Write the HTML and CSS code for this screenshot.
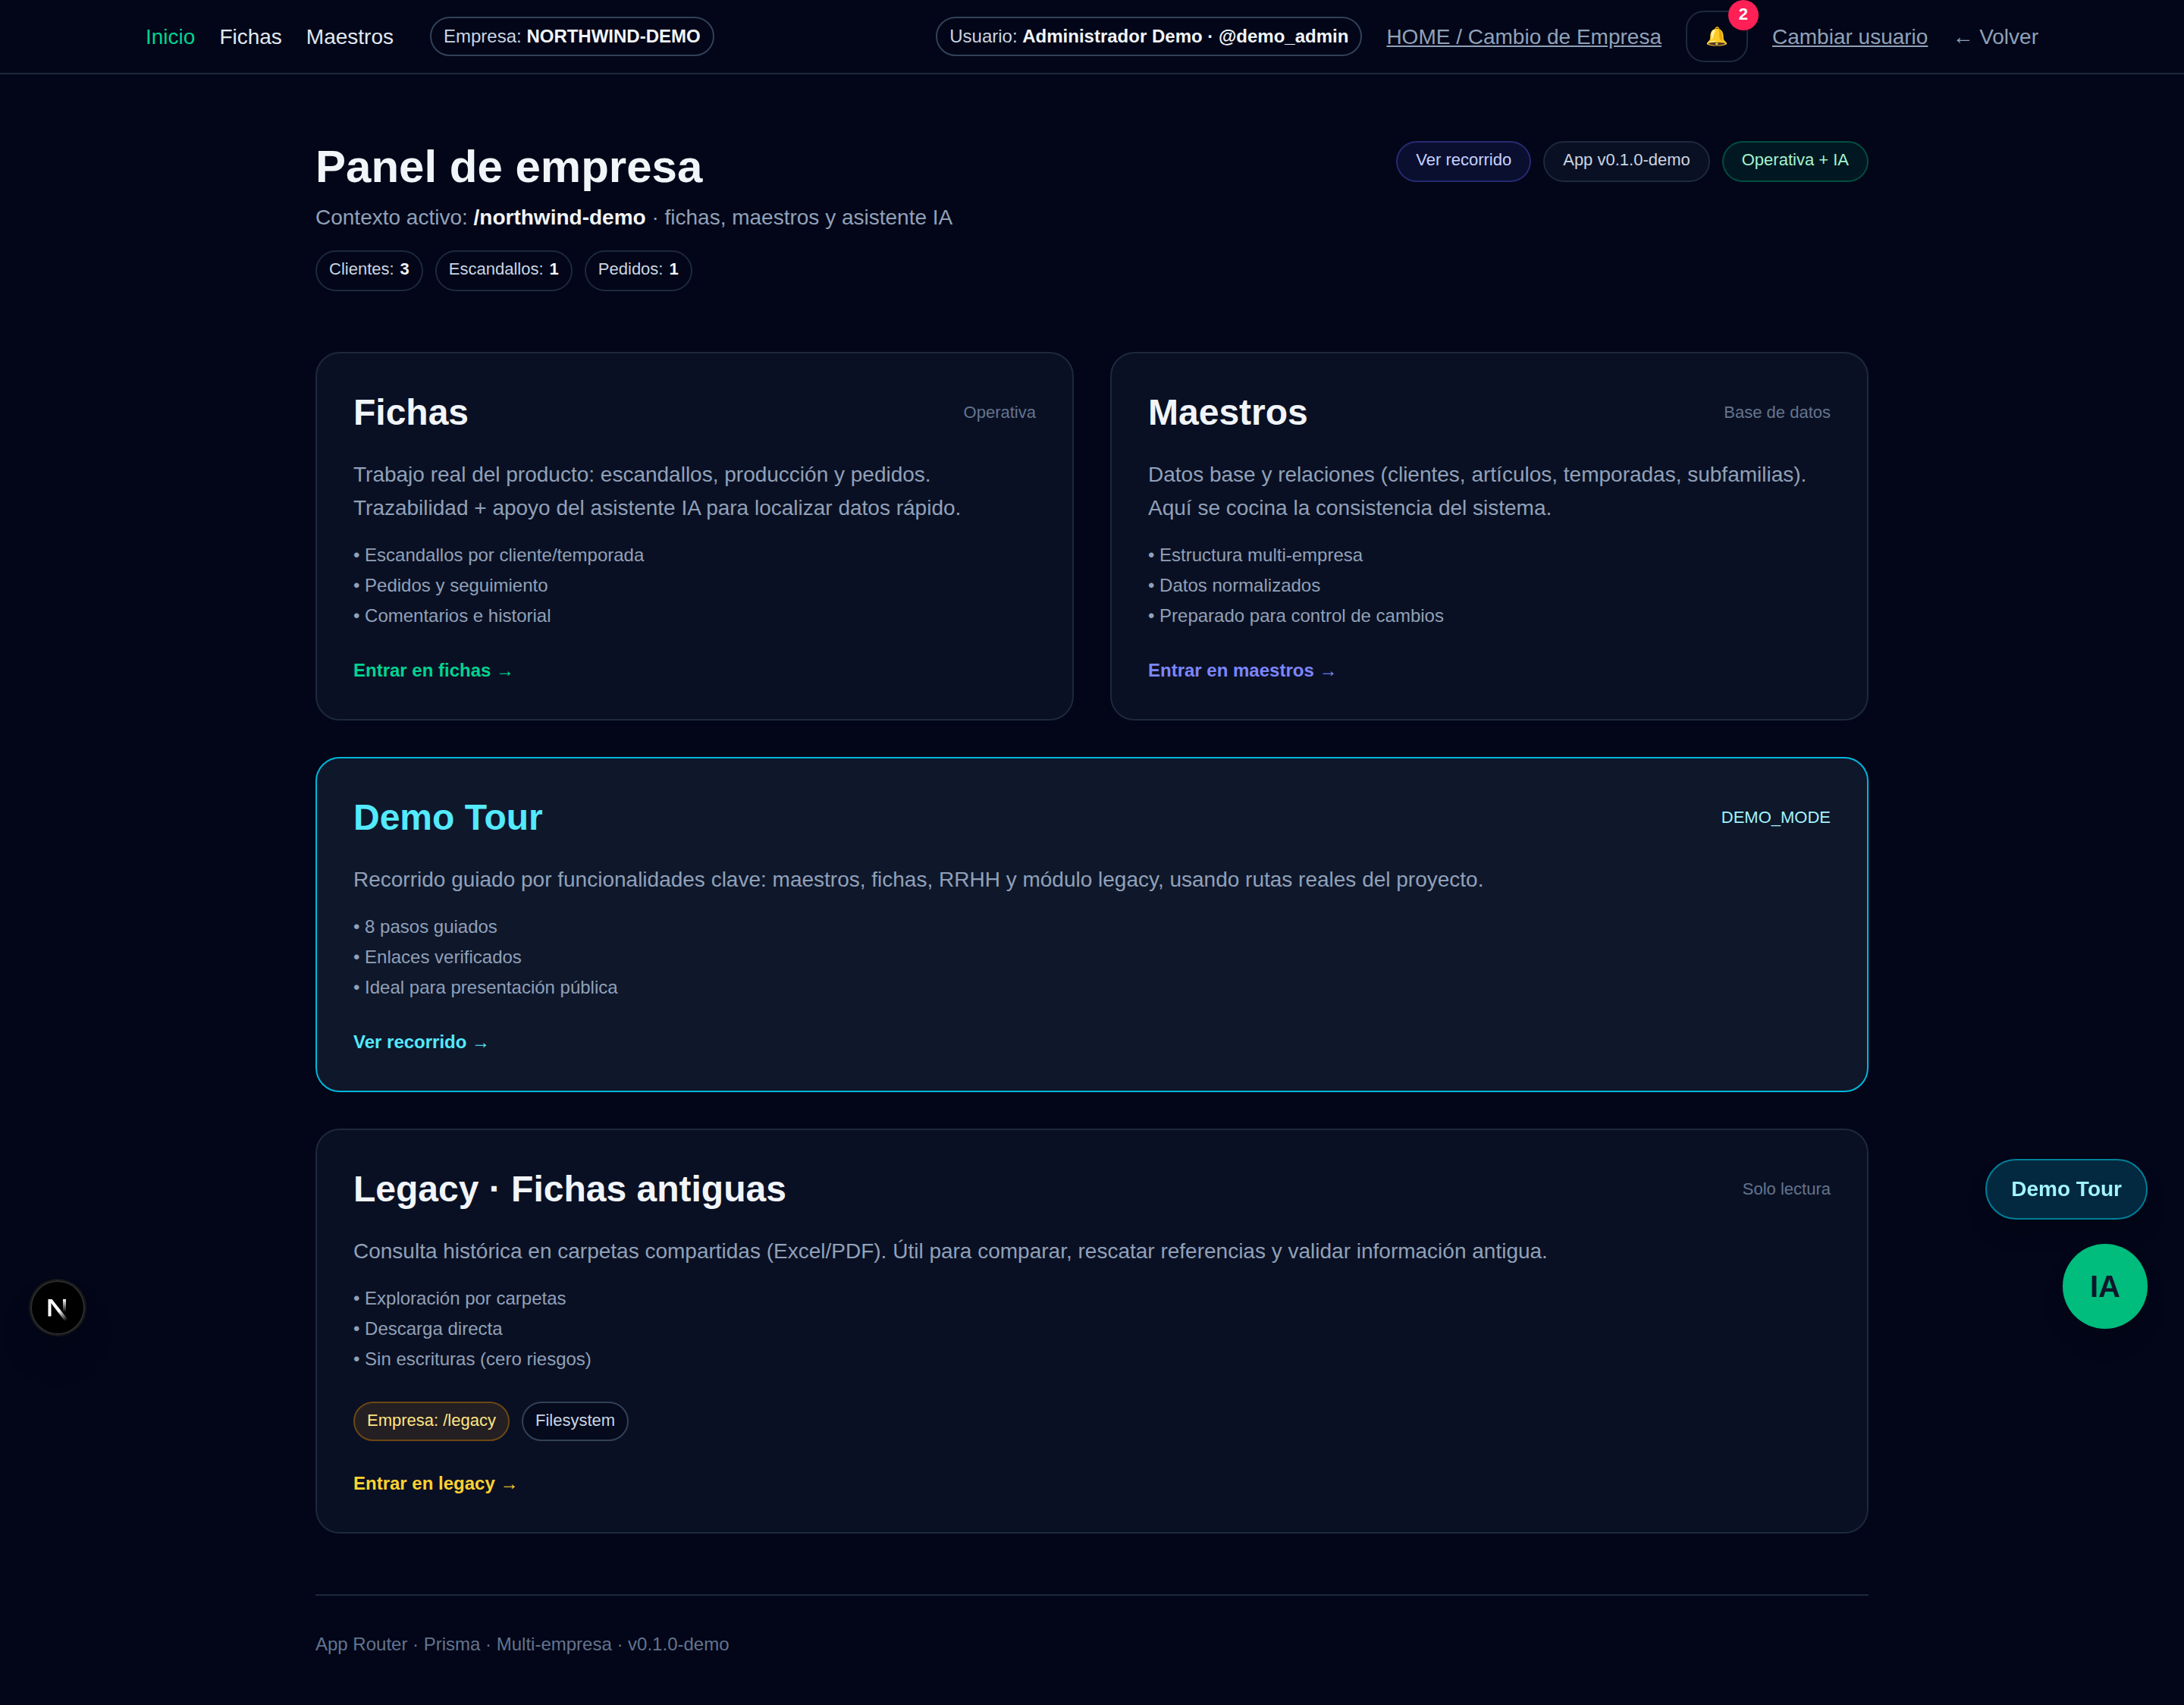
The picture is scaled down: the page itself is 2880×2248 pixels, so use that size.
FILE: index.html
```html
<!DOCTYPE html>
<html lang="es">
<head>
  <meta charset="UTF-8">
  <title>Panel de empresa</title>
  <link rel="stylesheet" href="styles.css">
</head>
<body>
  <header class="topbar">
    <div class="topbar-inner">
      <nav class="nav">
        <a href="#" class="active">Inicio</a>
        <a href="#">Fichas</a>
        <a href="#">Maestros</a>
      </nav>
      <span class="context">Empresa: <strong>NORTHWIND-DEMO</strong></span>
      <div class="session">
        <span class="context">Usuario: <strong>Administrador Demo · @demo_admin</strong></span>
        <a href="#" class="underlined">HOME / Cambio de Empresa</a>
        <button type="button" class="bell" aria-label="Notificaciones">🔔<span class="bell-count">2</span></button>
        <a href="#" class="underlined">Cambiar usuario</a>
        <a href="#">← Volver</a>
      </div>
    </div>
  </header>

  <main class="page">
    <section class="hero">
      <div>
        <h1>Panel de empresa</h1>
        <p class="subtitle">Contexto activo: <strong>/northwind-demo</strong> · fichas, maestros y asistente IA</p>
        <div class="stats">
          <span class="pill">Clientes: <strong>3</strong></span>
          <span class="pill">Escandallos: <strong>1</strong></span>
          <span class="pill">Pedidos: <strong>1</strong></span>
        </div>
      </div>
      <div class="badges">
        <a href="#" class="pill wide indigo">Ver recorrido</a>
        <span class="pill wide slate">App v0.1.0-demo</span>
        <span class="pill wide green">Operativa + IA</span>
      </div>
    </section>

    <section class="cards">
      <article class="card">
        <div class="card-head">
          <h2>Fichas</h2>
          <span class="tag">Operativa</span>
        </div>
        <p>Trabajo real del producto: escandallos, producción y pedidos.<br>Trazabilidad + apoyo del asistente IA para localizar datos rápido.</p>
        <ul>
          <li>• Escandallos por cliente/temporada</li>
          <li>• Pedidos y seguimiento</li>
          <li>• Comentarios e historial</li>
        </ul>
        <a href="#" class="enter enter-green">Entrar en fichas →</a>
      </article>

      <article class="card">
        <div class="card-head">
          <h2>Maestros</h2>
          <span class="tag">Base de datos</span>
        </div>
        <p>Datos base y relaciones (clientes, artículos, temporadas, subfamilias).<br>Aquí se cocina la consistencia del sistema.</p>
        <ul>
          <li>• Estructura multi-empresa</li>
          <li>• Datos normalizados</li>
          <li>• Preparado para control de cambios</li>
        </ul>
        <a href="#" class="enter enter-indigo">Entrar en maestros →</a>
      </article>

      <article class="card full demo">
        <div class="card-head">
          <h2>Demo Tour</h2>
          <span class="tag">DEMO_MODE</span>
        </div>
        <p>Recorrido guiado por funcionalidades clave: maestros, fichas, RRHH y módulo legacy, usando rutas reales del proyecto.</p>
        <ul>
          <li>• 8 pasos guiados</li>
          <li>• Enlaces verificados</li>
          <li>• Ideal para presentación pública</li>
        </ul>
        <a href="#" class="enter enter-cyan">Ver recorrido →</a>
      </article>

      <article class="card full">
        <div class="card-head">
          <h2>Legacy · Fichas antiguas</h2>
          <span class="tag">Solo lectura</span>
        </div>
        <p>Consulta histórica en carpetas compartidas (Excel/PDF). Útil para comparar, rescatar referencias y validar información antigua.</p>
        <ul>
          <li>• Exploración por carpetas</li>
          <li>• Descarga directa</li>
          <li>• Sin escrituras (cero riesgos)</li>
        </ul>
        <div class="sources">
          <span class="pill amber">Empresa: /legacy</span>
          <span class="pill dark">Filesystem</span>
        </div>
        <a href="#" class="enter enter-amber">Entrar en legacy →</a>
      </article>
    </section>

    <footer class="footer">App Router · Prisma · Multi-empresa · v0.1.0-demo</footer>
  </main>

  <div class="floating">
    <a href="#" class="tour">Demo Tour</a>
    <button type="button" class="assistant">IA</button>
  </div>

  <button type="button" class="devtools" aria-label="Next.js">
    <svg viewBox="0 0 72 72" width="72" height="72">
      <defs>
        <linearGradient id="diagonal" gradientUnits="userSpaceOnUse" x1="38" y1="40" x2="48" y2="53">
          <stop offset="0" stop-color="#fff"/>
          <stop offset="1" stop-color="#fff" stop-opacity="0"/>
        </linearGradient>
        <linearGradient id="stem" gradientUnits="userSpaceOnUse" x1="45" y1="25" x2="45" y2="42">
          <stop offset="0" stop-color="#fff"/>
          <stop offset="1" stop-color="#fff" stop-opacity="0"/>
        </linearGradient>
      </defs>
      <rect x="23.5" y="25" width="4" height="22.5" fill="#fff"/>
      <path d="M23.5 25h5L49.5 51.5L45.5 54Z" fill="url(#diagonal)"/>
      <rect x="43" y="25" width="4" height="17" fill="url(#stem)"/>
    </svg>
  </button>
</body>
</html>
```
FILE: styles.css
```css
* {
  box-sizing: border-box;
}
body {
  margin: 0;
  background-color: #020618;
  color: #e2e8f0;
  font-family: "Liberation Sans", Arial, sans-serif;
  font-size: 28px;
  line-height: 40px;
}
h1, h2, p, ul {
  margin: 0;
  padding: 0;
}
ul {
  list-style: none;
}
a {
  color: inherit;
  text-decoration: none;
}
button {
  font-family: inherit;
  cursor: pointer;
}

/* Barra superior */
.topbar {
  border-bottom: 2px solid #1d293d;
}
.topbar-inner {
  display: flex;
  align-items: center;
  max-width: 2560px;
  height: 96px;
  margin: 0 auto;
  padding: 0 32px;
}
.nav {
  display: flex;
  gap: 32px;
  margin-right: 48px;
}
.nav a, .session a {
  padding-top: 2px;
}
.nav .active {
  color: #00d492;
}
.context {
  padding: 8px 16px;
  border: 2px solid #314158;
  border-radius: 26px;
  color: #cad5e2;
  font-size: 24px;
  line-height: 32px;
}
.context strong {
  color: #f1f5f9;
}
.session {
  display: flex;
  align-items: center;
  gap: 32px;
  margin-left: auto;
  color: #90a1b9;
}
.underlined {
  text-decoration: underline;
}
.bell {
  position: relative;
  padding: 16px 24px;
  border: 2px solid #1d293d;
  border-radius: 24px;
  background: none;
  font-size: 24px;
  line-height: 32px;
}
.bell-count {
  position: absolute;
  top: -16px;
  right: -16px;
  width: 40px;
  height: 40px;
  border-radius: 20px;
  background-color: #ff2056;
  color: #fff;
  font-size: 22px;
  font-weight: bold;
  line-height: 38px;
  text-align: center;
}

/* Contenido */
.page {
  max-width: 2048px;
  margin: 0 auto;
  padding: 86px 0 64px;
}
.hero {
  display: flex;
  justify-content: space-between;
  align-items: flex-start;
  margin-bottom: 80px;
}
h1 {
  color: #f1f5f9;
  font-size: 60px;
  line-height: 72px;
}
.subtitle {
  margin-top: 8px;
  color: #90a1b9;
  line-height: 46px;
}
.subtitle strong {
  color: #f1f5f9;
}
.stats, .badges, .sources {
  display: flex;
  gap: 16px;
}
.stats {
  margin-top: 20px;
}
.badges {
  padding-top: 2px;
}
.pill {
  display: flex;
  gap: 8px;
  padding: 8px 16px 12px;
  border: 2px solid #1d293d;
  border-radius: 27px;
  color: #cad5e2;
  font-size: 22px;
  line-height: 30px;
}
.pill strong {
  color: #f1f5f9;
}
.wide {
  padding: 8px 24px 12px;
}
.indigo {
  border-color: rgba(97, 95, 255, 0.4);
  background-color: rgba(97, 95, 255, 0.1);
  background-clip: padding-box;
  color: #c6d2ff;
}
.slate {
  background-color: #0a1023;
}
.green {
  border-color: rgba(0, 188, 125, 0.4);
  background-color: rgba(0, 188, 125, 0.1);
  background-clip: padding-box;
  color: #a4f4cf;
}

/* Tarjetas */
.cards {
  display: grid;
  grid-template-columns: 1fr 1fr;
  gap: 48px;
}
.card {
  padding: 48px;
  border: 2px solid #1d293d;
  border-radius: 32px;
  background-color: #0a1023;
}
.full {
  grid-column: span 2;
}
.card-head {
  display: flex;
  justify-content: space-between;
  align-items: center;
}
h2 {
  color: #f1f5f9;
  font-size: 48px;
  line-height: 60px;
}
.tag {
  color: #62748e;
  font-size: 22px;
  line-height: 32px;
}
.card p {
  margin-top: 30px;
  color: #90a1b9;
  line-height: 44px;
}
.card ul {
  display: grid;
  gap: 8px;
  margin-top: 24px;
  color: #90a1b9;
  font-size: 24px;
  line-height: 32px;
}
.sources {
  margin-top: 40px;
}
.sources .pill {
  padding-bottom: 10px;
}
.amber {
  border-color: #6b4715;
  background-color: #241f22;
  color: #fee685;
}
.dark {
  border-color: #314158;
  background-color: #050a1d;
}
.enter {
  display: block;
  margin-top: 40px;
  font-size: 24px;
  font-weight: bold;
  line-height: 32px;
}
.enter-green {
  color: #00d492;
}
.enter-indigo {
  color: #7c86ff;
}
.enter-cyan {
  color: #53eafd;
}
.enter-amber {
  color: #ffd230;
}
.demo {
  border-color: #00b8db;
  background-color: #0f172b;
}
.demo h2 {
  color: #53eafd;
}
.demo .tag {
  color: #a2f4fd;
}

.footer {
  margin-top: 80px;
  padding-top: 48px;
  border-top: 2px solid #1d293d;
  color: #62748e;
  font-size: 24px;
  line-height: 32px;
}

/* Botones flotantes */
.floating {
  position: fixed;
  right: 48px;
  bottom: 496px;
  display: flex;
  flex-direction: column;
  align-items: flex-end;
  gap: 32px;
}
.tour {
  padding: 18px 32px;
  border: 2px solid #007f99;
  border-radius: 40px;
  background-color: #02293f;
  box-shadow: 0 20px 30px rgba(0, 0, 0, 0.1);
  color: #a2f4fd;
  font-weight: bold;
}
.assistant {
  width: 112px;
  height: 112px;
  border: none;
  border-radius: 56px;
  background-color: #00bc7d;
  box-shadow: 0 20px 30px rgba(0, 0, 0, 0.1);
  color: #0f172b;
  font-size: 40px;
  font-weight: bold;
}
.devtools {
  position: fixed;
  left: 40px;
  bottom: 488px;
  width: 72px;
  height: 72px;
  padding: 0;
  border: none;
  border-radius: 36px;
  background-color: #000;
  box-shadow: 0 0 0 2px #171717, inset 0 0 0 2px #2c2d30, 0 32px 48px rgba(0, 0, 0, 0.1);
}
.devtools svg {
  display: block;
}
```
